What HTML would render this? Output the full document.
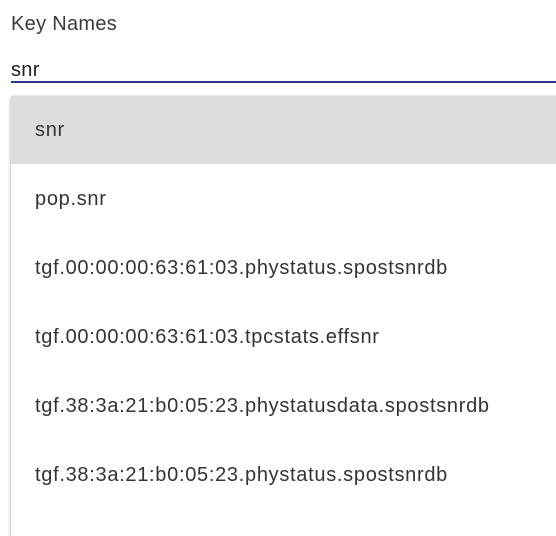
<!DOCTYPE html>
<html><head><style>
body{margin:0;width:556px;height:517px;overflow:hidden;background:#fff;font-family:"Liberation Sans",Arial,sans-serif;}
.lbl{position:absolute;left:11px;top:13px;font-size:20px;letter-spacing:0.3px;color:#3a3a3a;}
.inp{position:absolute;left:11px;top:59px;font-size:20px;letter-spacing:0.3px;color:#222;}
.ul{position:absolute;left:11px;top:81px;width:545px;height:2px;background:#2a3990;}
.menu{position:absolute;left:11px;top:96px;width:560px;height:440px;background:#fff;box-shadow:0 2px 4px rgba(0,0,0,.25),0 0 2px rgba(0,0,0,.15);}
.it{height:69px;line-height:70px;padding-left:24px;font-size:20px;letter-spacing:0.7px;color:#333;white-space:nowrap;}
.sel{background:#dcdcdc;height:68px;line-height:68px;}
</style></head><body>
<div class="lbl">Key Names</div>
<div class="inp">snr</div>
<div class="ul"></div>
<div class="menu">
<div class="it sel">snr</div>
<div class="it">pop.snr</div>
<div class="it">tgf.00:00:00:63:61:03.phystatus.spostsnrdb</div>
<div class="it">tgf.00:00:00:63:61:03.tpcstats.effsnr</div>
<div class="it">tgf.38:3a:21:b0:05:23.phystatusdata.spostsnrdb</div>
<div class="it">tgf.38:3a:21:b0:05:23.phystatus.spostsnrdb</div>
</div>
</body></html>
